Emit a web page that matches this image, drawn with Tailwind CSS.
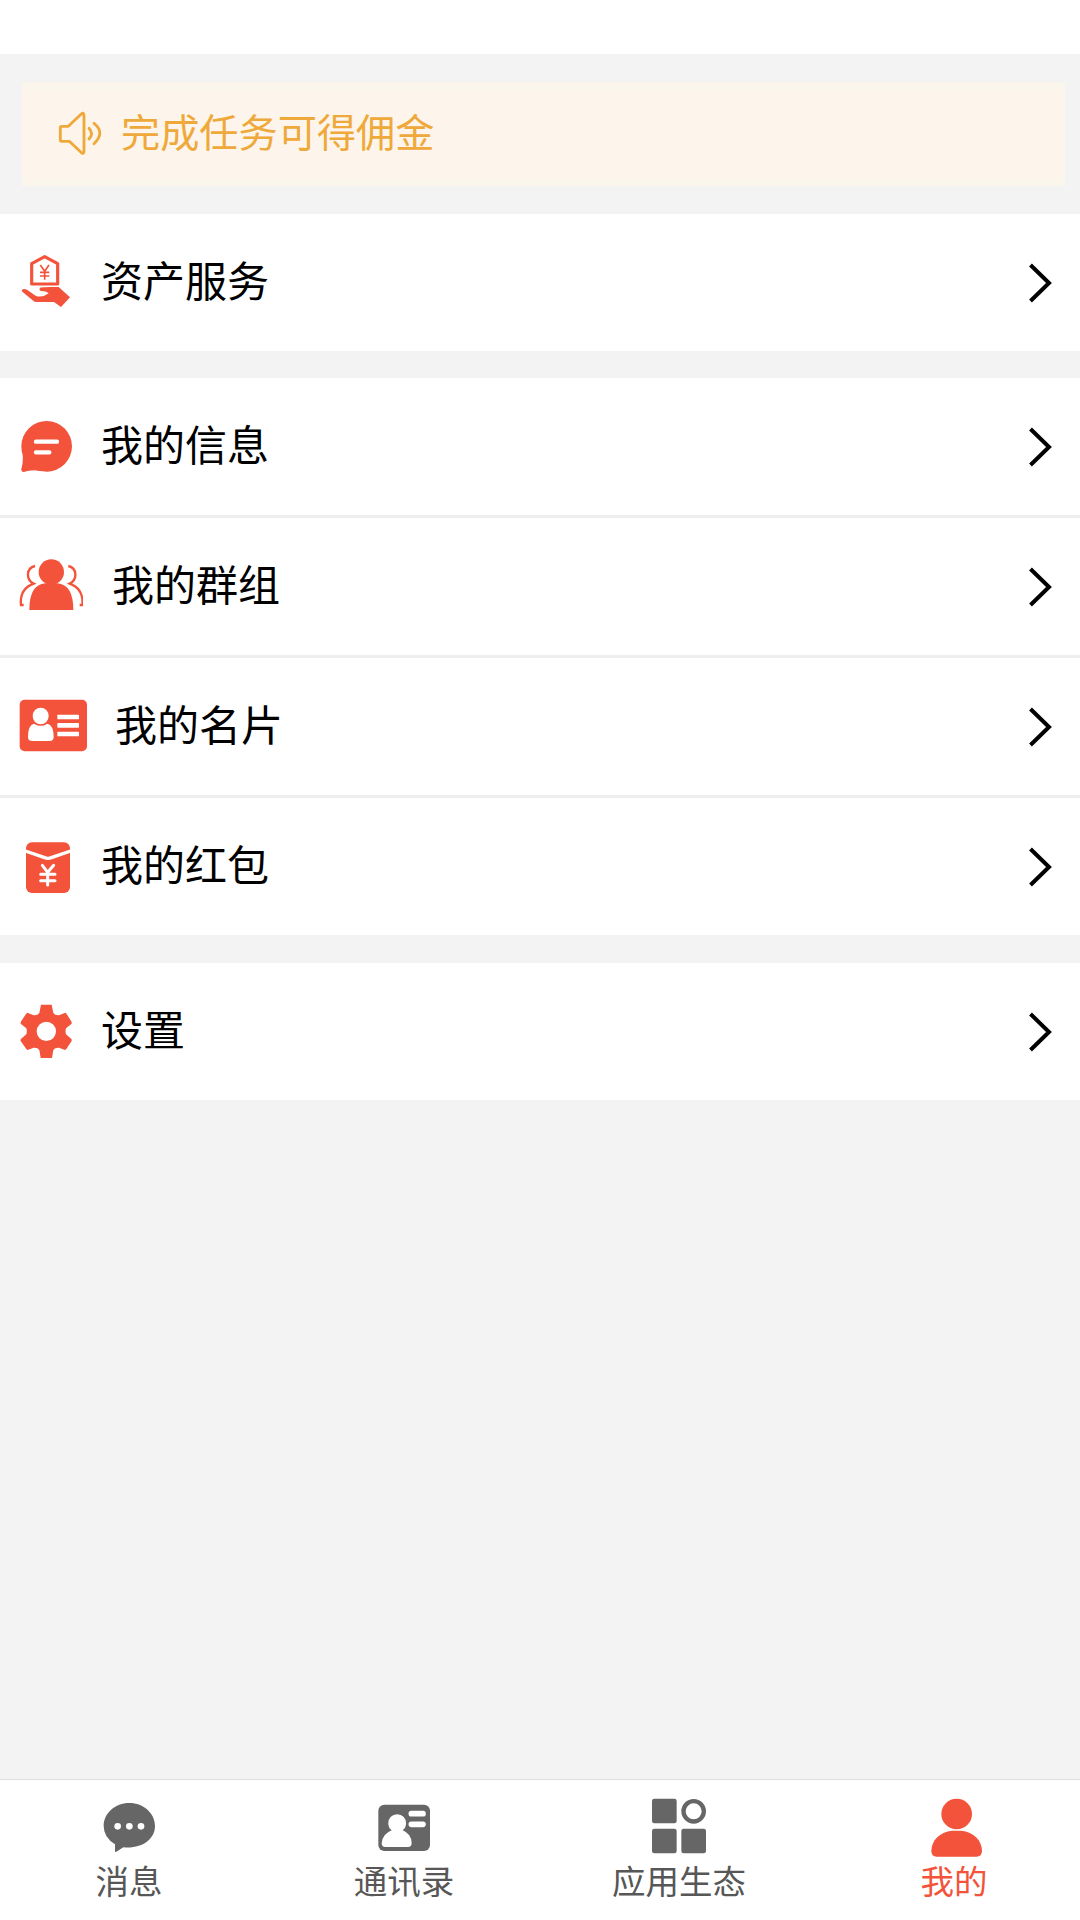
<!DOCTYPE html>
<html lang="zh-CN">
<head>
<meta charset="utf-8">
<title>我的</title>
<script src="https://cdn.jsdelivr.net/npm/@tailwindcss/browser@4"></script>
</head>
<body class="bg-[#f3f3f3]">
<div class="flex h-[1920px] w-[1080px] flex-col overflow-hidden bg-[#f3f3f3] font-['Noto_Sans_CJK_SC',sans-serif] text-black">
  <header class="h-[54px] shrink-0 bg-white"></header>

  <div class="mt-[28px] mr-[15px] mb-[28px] ml-[22px] flex h-[104px] shrink-0 items-center border-y-8 border-[#faf6eb] bg-[#fdf5eb] pl-[36px] text-[#efa93b]">
    <svg class="h-[46px] w-[44px] shrink-0" viewBox="174 212 132 138" fill="none" stroke="currentColor" stroke-width="8.5" stroke-linecap="round" stroke-linejoin="round">
      <path d="M185 258H205L243 222Q252 214 252 226V332Q252 344 243 336L208 303H185Q181 303 181 299V262Q181 258 185 258Z"/>
      <path d="M267 264Q282 280 267 296M282 249Q317 277 282 310"/>
    </svg>
    <span class="ml-[19px] -mt-[8px] text-[39.2px] leading-[56px] whitespace-nowrap">完成任务可得佣金</span>
  </div>

  <main class="flex shrink-0 flex-col text-[42px] leading-[60px]">
    <section class="bg-white">
      <a class="flex h-[137px] items-center pr-[27px] pl-[18px]">
        <svg class="h-[60px] w-[54px] shrink-0" viewBox="54 98 162 180" fill="#f3533b">
          <path d="M134 109L173 130V191H95V130Z" fill="none" stroke="#f3533b" stroke-width="9.5" stroke-linejoin="round"/>
          <path d="M121 134L134 153L147 134M134 153V178M120 156H148M120 167H148" fill="none" stroke="#f3533b" stroke-width="5"/>
          <path d="M65 209Q71 203 81 208L108 227Q128 233 146 219Q142 213 123 212Q116 209 120 202Q126 199 176 200L210 231L183 260L162 245H108Q103 245 97 239L67 214Z"/>
        </svg>
        <span class="ml-[29px] -mt-[8px] flex-1">资产服务</span>
        <svg class="h-[42px] w-[24px]" viewBox="0 0 24 42" fill="none" stroke="#000" stroke-width="4"><path d="M1.5 3L20 21L1.5 39"/></svg>
      </a>
    </section>

    <section class="mt-[27px] flex flex-col gap-[3px] bg-[linear-gradient(#eeeeee,#eeeeee)]">
      <a class="flex h-[137px] items-center bg-white pr-[27px] pl-[18px]">
        <svg class="h-[60px] w-[54px] shrink-0" viewBox="54 111 162 180">
          <path d="M64 198A76 76 0 1 1 140 275Q117 274 105 271Q84 271 71 276Q63 276 64 267Q70 247 68 225Q64 213 64 198Z" fill="#f3533b"/>
          <path d="M108 185H171M108 217H148" stroke="#fff" stroke-width="13" stroke-linecap="round"/>
        </svg>
        <span class="ml-[29px] -mt-[7px] flex-1">我的信息</span>
        <svg class="h-[42px] w-[24px]" viewBox="0 0 24 42" fill="none" stroke="#000" stroke-width="4"><path d="M1.5 3L20 21L1.5 39"/></svg>
      </a>
      <a class="flex h-[137px] items-center bg-white pr-[27px] pl-[18px]">
        <svg class="h-[60px] w-[65px] shrink-0" viewBox="54 111 195 180" fill="#f3533b">
          <circle cx="154" cy="156" r="38"/>
          <path d="M88 270Q88 194 136 190H172Q220 194 220 270Z"/>
          <path d="M105 138C77 145 78 180 101 191Q58 207 63 255H71M205 138C233 145 232 180 209 191Q252 207 247 255H239" fill="none" stroke="#f3533b" stroke-width="7"/>
        </svg>
        <span class="ml-[29px] -mt-[7px] flex-1">我的群组</span>
        <svg class="h-[42px] w-[24px]" viewBox="0 0 24 42" fill="none" stroke="#000" stroke-width="4"><path d="M1.5 3L20 21L1.5 39"/></svg>
      </a>
      <a class="flex h-[137px] items-center bg-white pr-[27px] pl-[18px]">
        <svg class="h-[60px] w-[69px] shrink-0" viewBox="54 110 207 180">
          <rect x="59" y="118" width="202" height="155" rx="15" fill="#f3533b"/>
          <g fill="#fff">
            <ellipse cx="122" cy="167" rx="24" ry="25"/>
            <path d="M102 190Q122 203 142 190Q161 194 161 230Q161 242 149 242H96Q84 242 84 230Q84 194 102 190Z"/>
            <rect x="172" y="163" width="65" height="14" rx="2"/>
            <rect x="172" y="188" width="65" height="14" rx="2"/>
            <rect x="172" y="214" width="65" height="14" rx="2"/>
          </g>
        </svg>
        <span class="ml-[28px] -mt-[7px] flex-1">我的名片</span>
        <svg class="h-[42px] w-[24px]" viewBox="0 0 24 42" fill="none" stroke="#000" stroke-width="4"><path d="M1.5 3L20 21L1.5 39"/></svg>
      </a>
      <a class="flex h-[137px] items-center bg-white pr-[27px] pl-[18px]">
        <svg class="h-[60px] w-[54px] shrink-0" viewBox="54 110 162 180">
          <rect x="78" y="126" width="132" height="152" rx="18" fill="#f3533b"/>
          <path d="M76 152L134 172Q144 176 154 172L212 152" fill="none" stroke="#fff" stroke-width="10"/>
          <path d="M127 195L143 216L161 195M143 216V254M122 222H165M122 241H165" fill="none" stroke="#fff" stroke-width="9" stroke-linecap="round"/>
        </svg>
        <span class="ml-[29px] -mt-[7px] flex-1">我的红包</span>
        <svg class="h-[42px] w-[24px]" viewBox="0 0 24 42" fill="none" stroke="#000" stroke-width="4"><path d="M1.5 3L20 21L1.5 39"/></svg>
      </a>
    </section>

    <section class="mt-[28px] bg-white">
      <a class="flex h-[137px] items-center pr-[27px] pl-[18px]">
        <svg class="h-[60px] w-[54px] shrink-0" viewBox="54 154 162 180" fill="#f3533b" fill-rule="evenodd">
          <path d="M123 162H155L160 187Q165 195 177 194L196 186L200 190L215 214V219L198 233Q195 242 198 251L215 266V271L199 295L195 298L177 291Q165 290 160 298L156 322H122L118 298Q113 290 101 291L83 298L79 295L62 271V266L79 251Q82 242 79 233L62 219V214L78 190L82 186L101 194Q113 195 118 187ZM139 213A29 29 0 1 0 139 271A29 29 0 1 0 139 213Z"/>
        </svg>
        <span class="ml-[29px] -mt-[7px] flex-1">设置</span>
        <svg class="h-[42px] w-[24px]" viewBox="0 0 24 42" fill="none" stroke="#000" stroke-width="4"><path d="M1.5 3L20 21L1.5 39"/></svg>
      </a>
    </section>
  </main>

  <nav class="mt-auto flex h-[141px] shrink-0 justify-between border-t border-[#dedede] bg-white pr-[51px] pl-[54px] text-[33.5px] leading-[46px] text-[#575757]">
    <a class="flex w-[150px] flex-col items-center pt-[15px]">
      <svg class="h-[62px] w-[64px]" viewBox="111 75 192 186">
        <path d="M208 99C251 99 285 130 285 168C285 207 247 237 190 232L168 246Q165 247 165 243V223Q131 202 131 168C131 130 165 99 208 99Z" fill="#666"/>
        <g fill="#fff"><circle cx="173" cy="169" r="10"/><circle cx="208" cy="169" r="10"/><circle cx="243" cy="169" r="10"/></g>
      </svg>
      <span>消息</span>
    </a>
    <a class="flex w-[150px] flex-col items-center pt-[15px]">
      <svg class="h-[62px] w-[64px]" viewBox="936 75 192 186">
        <rect x="955" y="104" width="155" height="139" rx="18" fill="#666"/>
        <path d="M995 181A27 27 0 1 1 1028 181Q1055 192 1055 220Q1055 231 1044 231H976Q965 231 965 220Q967 192 995 181Z" fill="#fff"/>
        <path d="M1054 131H1089M1054 163H1089" stroke="#fff" stroke-width="17" stroke-linecap="round"/>
      </svg>
      <span>通讯录</span>
    </a>
    <a class="flex w-[150px] flex-col items-center pt-[15px]">
      <svg class="h-[62px] w-[64px]" viewBox="201 75 192 186" fill="#666">
        <rect x="216" y="86" width="74" height="74" rx="7"/>
        <rect x="216" y="176" width="74" height="74" rx="7"/>
        <rect x="304" y="176" width="74" height="74" rx="7"/>
        <circle cx="341" cy="124" r="30.5" fill="none" stroke="#666" stroke-width="13"/>
      </svg>
      <span>应用生态</span>
    </a>
    <a class="flex w-[150px] flex-col items-center pt-[15px] text-[#f3533b]">
      <svg class="h-[62px] w-[64px]" viewBox="1025 75 192 186" fill="#f3533b">
        <circle cx="1129" cy="132" r="46"/>
        <path d="M1115 182H1143C1180 185 1205 212 1205 243Q1205 260 1188 260H1069Q1053 260 1053 243C1053 212 1078 185 1115 182Z"/>
      </svg>
      <span>我的</span>
    </a>
  </nav>
</div>
</body>
</html>
